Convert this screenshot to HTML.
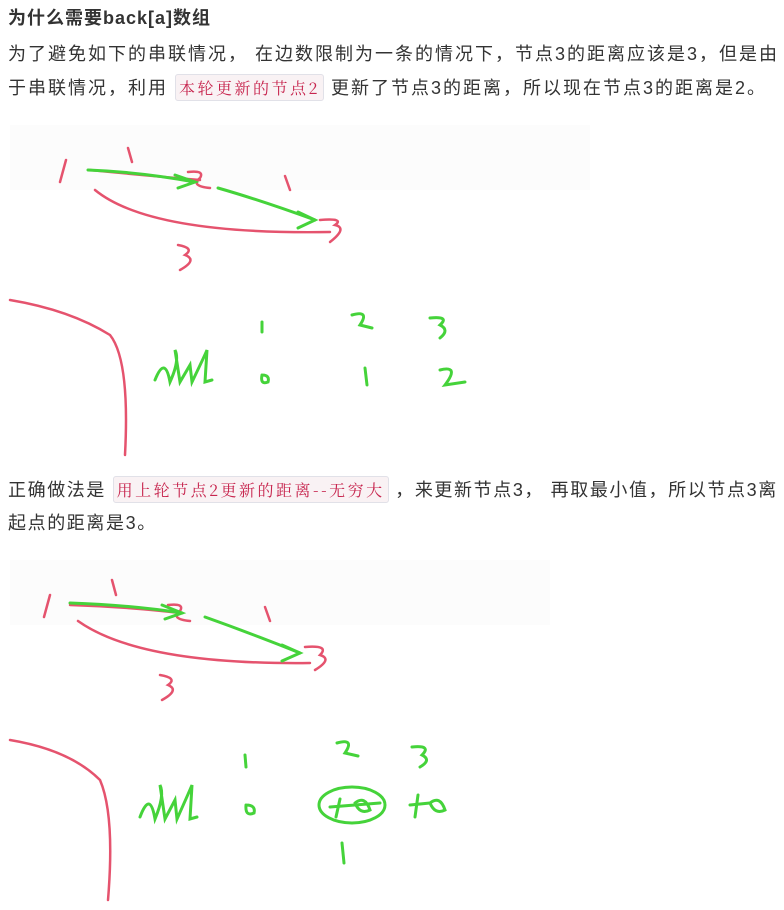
<!DOCTYPE html>
<html><head><meta charset="utf-8"><style>
body{margin:0;width:784px;height:910px;background:#fff;font-family:"Liberation Sans","Noto Sans CJK SC",sans-serif;color:#333;overflow:hidden;position:relative}
h3{position:absolute;left:8px;top:5px;margin:0;font-size:18px;font-weight:bold;color:#333;line-height:26px;letter-spacing:1px}
p{position:absolute;left:8px;margin:0;font-size:18px;line-height:33px;width:776px;color:#333;letter-spacing:2px}
code{font-family:"Noto Serif CJK SC","Liberation Serif",serif;font-size:16px;color:#c7254e;background:#f9f2f4;border:1px solid #e1e1e8;border-radius:3px;padding:1px 3px;letter-spacing:2.5px}
svg{position:absolute;left:0}
</style></head><body>
<h3>为什么需要back[a]数组</h3>
<p style="top:38px">为了避免如下的串联情况， 在边数限制为一条的情况下，节点3的距离应该是3，但是由于串联情况，利用 <code>本轮更新的节点2</code> 更新了节点3的距离，所以现在节点3的距离是2。</p>
<svg style="top:120px" width="784" height="340" fill="none" stroke-linecap="round" stroke-width="2.5">
<rect x="10" y="5" width="580" height="65" fill="#fcfcfc" stroke="none"/>
<g stroke="#e5536e">
<path d="M66 40 L60 62"/><path d="M128 28 L132 42"/><path d="M90 50 Q140 55 200 60"/>
<path d="M188 52 Q205 50 200 58 Q190 66 210 68"/><path d="M285 56 L290 70"/>
<path d="M95 70 Q150 115 330 112"/><path d="M320 100 Q345 98 335 105 Q348 108 330 122"/>
<path d="M178 125 Q195 128 185 135 Q198 140 180 150"/>
<path d="M10 180 Q70 190 110 215 Q130 240 125 335"/>
</g>
<g stroke="#45d33a" stroke-width="3">
<path d="M88 50 Q140 52 195 62"/><path d="M175 55 L195 62 L178 68"/>
<path d="M218 68 Q260 80 315 100"/><path d="M298 92 L315 100 L298 108"/>
<path d="M155 260 Q165 235 170 262 Q180 240 175 230 L180 262 L190 245 L192 262 Q205 235 207 230 L205 262 L212 260"/>
<path d="M262 255 Q270 255 268 262 Q260 265 262 255"/><path d="M262 202 L262 212"/>
<path d="M365 248 L367 265"/><path d="M352 195 Q370 190 360 205 L372 208"/>
<path d="M440 250 Q460 245 445 265 L465 262"/><path d="M430 198 Q450 196 440 205 Q450 210 440 218"/>
</g>
</svg>
<p style="top:473px;letter-spacing:1.6px">正确做法是 <code>用上轮节点2更新的距离--无穷大</code> ，来更新节点3， 再取最小值，所以节点3离起点的距离是3。</p>
<svg style="top:555px" width="784" height="355" fill="none" stroke-linecap="round" stroke-width="2.5">
<rect x="10" y="5" width="540" height="65" fill="#fcfcfc" stroke="none"/>
<g stroke="#e5536e">
<path d="M50 40 L44 62"/><path d="M112 25 L116 40"/><path d="M70 50 Q130 52 180 58"/>
<path d="M168 50 Q185 48 180 56 Q170 64 190 66"/><path d="M265 52 L270 66"/>
<path d="M78 66 Q140 110 310 108"/><path d="M305 92 Q330 90 320 100 Q333 104 315 115"/>
<path d="M160 120 Q178 123 168 130 Q180 135 162 145"/>
<path d="M10 185 Q70 195 100 225 Q115 260 108 345"/>
</g>
<g stroke="#45d33a" stroke-width="3">
<path d="M70 48 Q130 50 182 58"/><path d="M162 50 L182 58 L165 64"/>
<path d="M205 62 Q250 78 300 98"/><path d="M282 90 L300 98 L282 106"/>
<path d="M140 262 Q150 235 155 264 Q165 240 160 230 L165 264 L175 245 L177 264 Q190 235 192 230 L190 264 L197 262"/>
<path d="M246 250 Q256 250 254 258 Q245 262 246 250"/><path d="M245 200 L246 212"/>
<ellipse cx="352" cy="250" rx="33" ry="18"/><path d="M330 252 L380 248"/><path d="M340 244 L336 262"/>
<path d="M355 248 Q365 240 370 255 Q360 260 355 248"/>
<path d="M342 288 L344 308"/><path d="M337 188 Q355 183 345 198 L358 201"/>
<path d="M410 250 L430 248"/><path d="M418 240 L415 262"/><path d="M430 248 Q440 240 445 255 Q435 260 430 248"/>
<path d="M412 192 Q432 190 422 200 Q432 205 420 212"/>
</g>
</svg>
</body></html>
